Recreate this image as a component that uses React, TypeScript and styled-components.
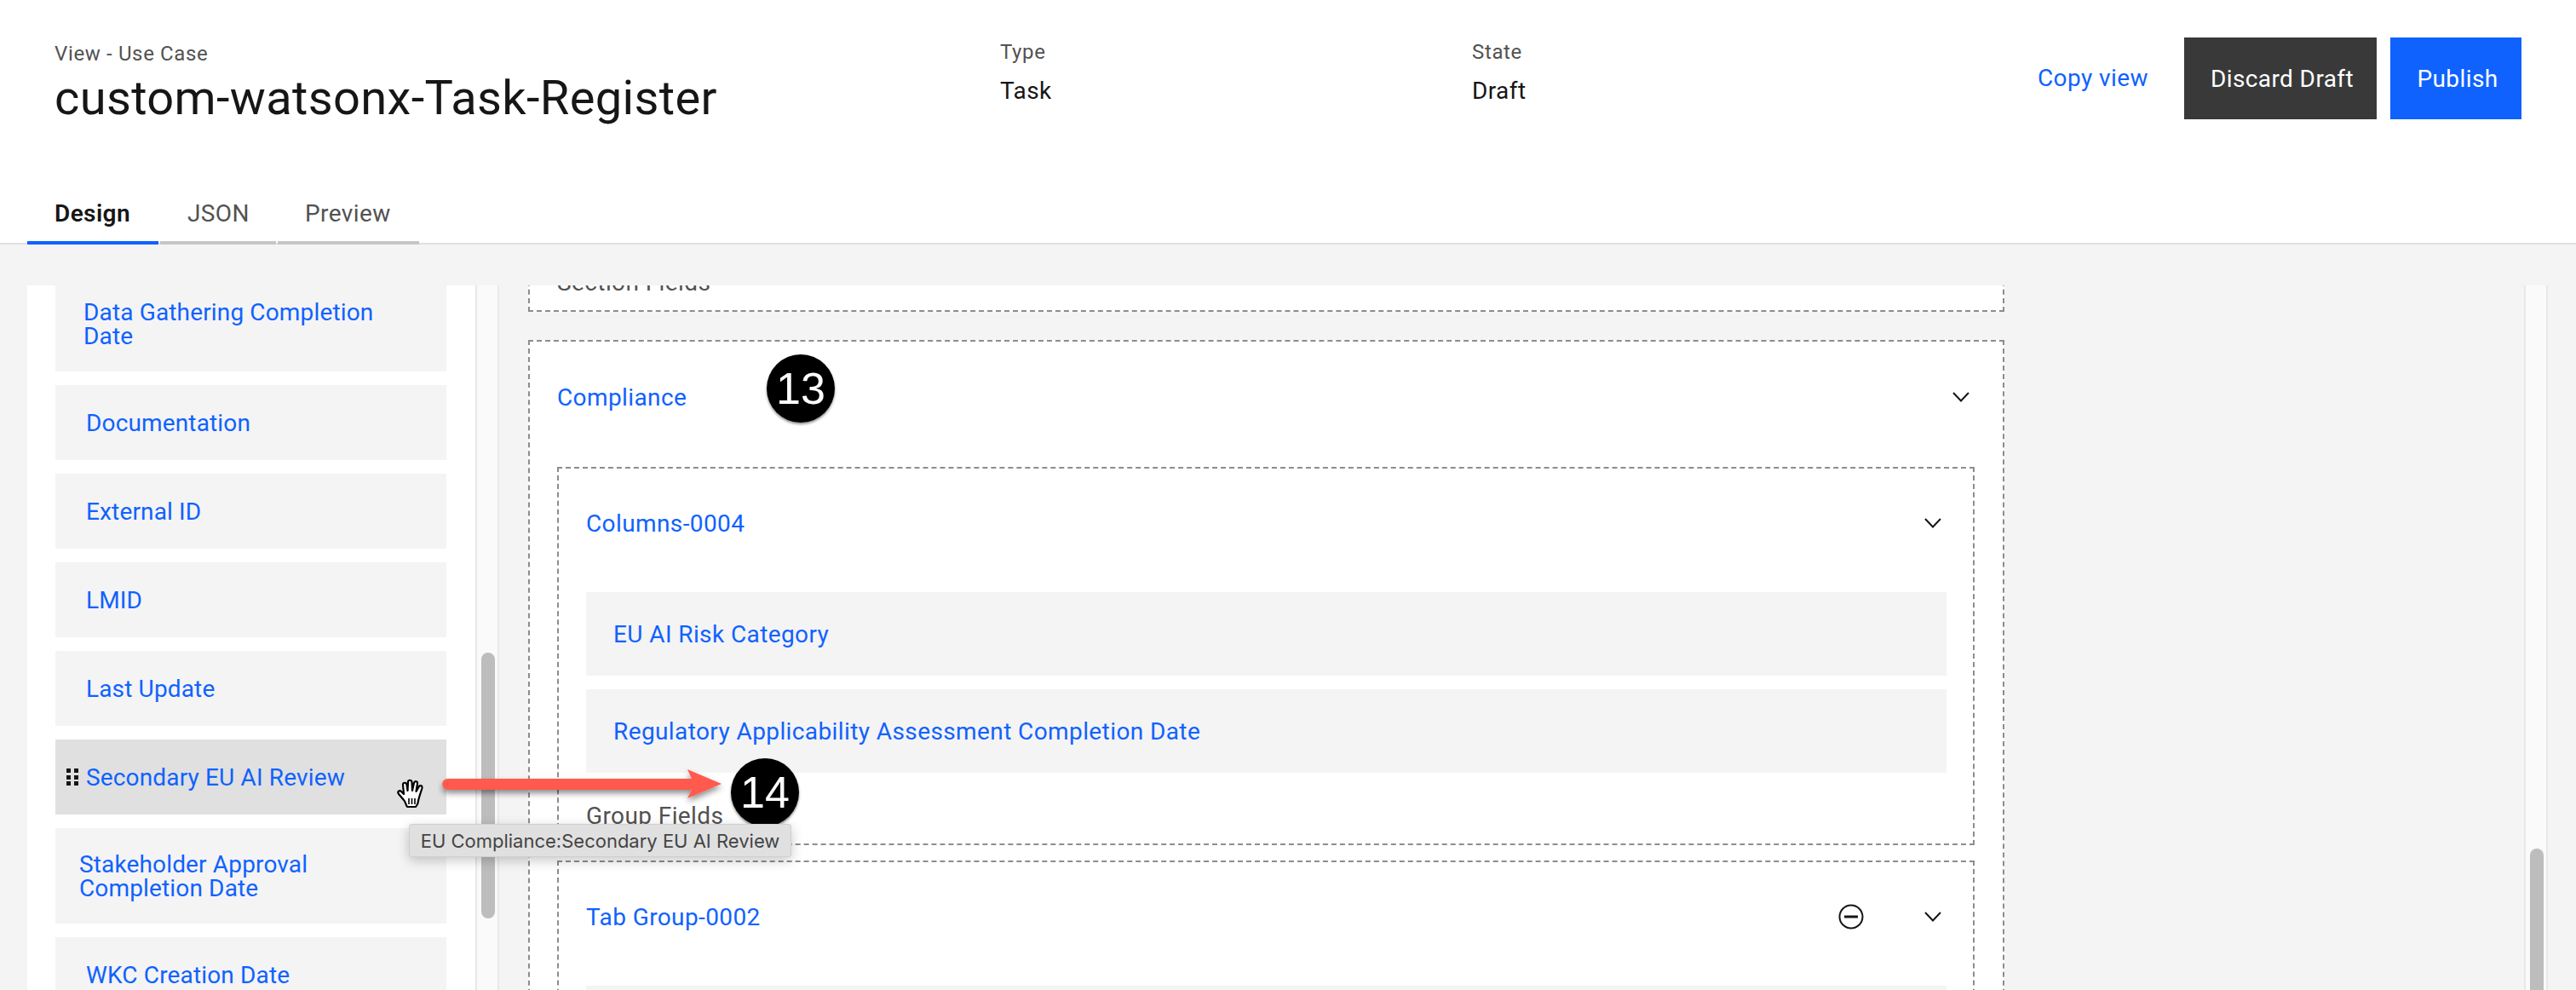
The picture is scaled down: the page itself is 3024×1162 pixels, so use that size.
import React from 'react';
import styled, { createGlobalStyle } from 'styled-components';

const FONT = `'Roboto', 'Noto Sans', sans-serif`;
const BLUE = '#0f62fe';
const BODY_SPACING = '0.4px';

const GlobalStyle = createGlobalStyle`
  html, body {
    margin: 0;
    padding: 0;
    background: #f4f4f4;
    overflow: hidden;
  }
  * {
    box-sizing: border-box;
  }
`;

type Field = { label: string; inset: number };

const FIELDS: Field[] = [
  { label: 'Data Gathering Completion Date', inset: 33 },
  { label: 'Documentation', inset: 36 },
  { label: 'External ID', inset: 36 },
  { label: 'LMID', inset: 36 },
  { label: 'Last Update', inset: 36 },
  { label: 'Secondary EU AI Review', inset: 36 },
  { label: 'Stakeholder Approval Completion Date', inset: 28 },
  { label: 'WKC Creation Date', inset: 36 },
];

const ChevronIcon = () => (
  <svg width="20" height="12" viewBox="0 0 20 12" fill="none">
    <path d="M1 1l9 9.5L19 1" stroke="#161616" strokeWidth="2" />
  </svg>
);

const MinusCircleIcon = () => (
  <svg width="30" height="30" viewBox="0 0 30 30" fill="none">
    <circle cx="15" cy="15" r="13.5" stroke="#161616" strokeWidth="2" />
    <rect x="7" y="13.5" width="16" height="3" fill="#161616" />
  </svg>
);

const DragHandleIcon = () => (
  <svg width="14" height="20" viewBox="0 0 14 20" fill="#161616">
    <rect x="0" y="0" width="5" height="5" />
    <rect x="9" y="0" width="5" height="5" />
    <rect x="0" y="8" width="5" height="5" />
    <rect x="9" y="8" width="5" height="5" />
    <rect x="0" y="15" width="5" height="5" />
    <rect x="9" y="15" width="5" height="5" />
  </svg>
);

const HandCursorIcon = () => (
  <svg width="34" height="36" viewBox="0 0 34 36">
    <path
      d="M9 25 L3 18 C1 15 4 13 6 15 L9 18 L8 7 C8 4 12 4 12.5 7 L13.5 14 L14 4 C14 1 18 1 18.5 4 L19 14 L21 5 C22 2 25.5 3 25 6 L23.5 15 L27 9 C28.5 7 31 8.5 30.5 11 L27 22 C26 25 26 27 25 30 L23 33 L13 33 C11 30 11 27 9 25 Z"
      fill="#fff"
      stroke="#000"
      strokeWidth="2.2"
      strokeLinejoin="round"
    />
    <path d="M15 23v7M18.5 23v7M22 23v7" stroke="#000" strokeWidth="1.6" />
  </svg>
);

const ArrowGraphic = () => (
  <svg width="360" height="64" viewBox="0 0 360 64">
    <defs>
      <filter id="arrow-shadow" x="-5%" y="-30%" width="110%" height="170%">
        <feDropShadow dx="0" dy="4" stdDeviation="3.5" floodColor="#000" floodOpacity="0.45" />
      </filter>
    </defs>
    <path
      d="M12 13 H298 L293 2 L333 19 L293 36 L298 26 H12 C3 26 3 13 12 13 Z"
      fill="#ff5a4d"
      filter="url(#arrow-shadow)"
    />
  </svg>
);

export default function App() {
  return (
    <>
      <GlobalStyle />
      <Page>
        <Header>
          <TitleBlock>
            <Eyebrow>View - Use Case</Eyebrow>
            <Title>custom-watsonx-Task-Register</Title>
          </TitleBlock>
          <MetaBlock $width={554}>
            <MetaLabel>Type</MetaLabel>
            <MetaValue>Task</MetaValue>
          </MetaBlock>
          <MetaBlock $width={664}>
            <MetaLabel>State</MetaLabel>
            <MetaValue>Draft</MetaValue>
          </MetaBlock>
          <CopyLink>Copy view</CopyLink>
          <ActionButton $bg="#393939" $width={226}>
            Discard Draft
          </ActionButton>
          <ActionButton $bg={BLUE} $width={154}>
            Publish
          </ActionButton>
        </Header>

        <TabBar>
          <Tab $active $width={154}>
            Design
          </Tab>
          <Tab $width={136}>JSON</Tab>
          <Tab $width={166}>Preview</Tab>
        </TabBar>

        <Workspace>
          <Palette>
            <FieldList>
              {FIELDS.map((f) => {
                const hovered = f.label === 'Secondary EU AI Review';
                return (
                  <FieldItem key={f.label} $hovered={hovered} $inset={f.inset}>
                    {hovered && (
                      <HandleSlot>
                        <DragHandleIcon />
                      </HandleSlot>
                    )}
                    <FieldText>{f.label}</FieldText>
                  </FieldItem>
                );
              })}
            </FieldList>
            <ScrollTrack>
              <ScrollThumb $top={431} $height={312} />
            </ScrollTrack>
          </Palette>

          <Canvas>
            <SectionRemainder>
              <FieldsLabel>Section Fields</FieldsLabel>
            </SectionRemainder>

            <OuterBox>
              <BoxHeader $height={130}>
                <BoxTitle>Compliance</BoxTitle>
                <IconSlot>
                  <ChevronIcon />
                </IconSlot>
              </BoxHeader>

              <InnerBox>
                <BoxHeader $height={128}>
                  <BoxTitle>Columns-0004</BoxTitle>
                  <IconSlot>
                    <ChevronIcon />
                  </IconSlot>
                </BoxHeader>
                <RowStack>
                  <FieldRow>EU AI Risk Category</FieldRow>
                  <FieldRow>Regulatory Applicability Assessment Completion Date</FieldRow>
                </RowStack>
                <FieldsLabel>Group Fields</FieldsLabel>
              </InnerBox>

              <InnerBox>
                <BoxHeader $height={128}>
                  <BoxTitle>Tab Group-0002</BoxTitle>
                  <RemoveSlot>
                    <MinusCircleIcon />
                  </RemoveSlot>
                  <IconSlot>
                    <ChevronIcon />
                  </IconSlot>
                </BoxHeader>
                <RowStack>
                  <FieldRow />
                </RowStack>
              </InnerBox>
            </OuterBox>
          </Canvas>

          <ScrollTrack>
            <ScrollThumb $top={661} $height={300} />
          </ScrollTrack>
        </Workspace>

        <StepBadge $left={900} $top={416}>
          13
        </StepBadge>
        <StepBadge $left={858} $top={890}>
          14
        </StepBadge>
        <ArrowOverlay>
          <ArrowGraphic />
        </ArrowOverlay>
        <CursorOverlay>
          <HandCursorIcon />
        </CursorOverlay>
        <Tooltip>EU Compliance:Secondary EU AI Review</Tooltip>
      </Page>
    </>
  );
}

const Page = styled.div`
  position: relative;
  width: 3024px;
  height: 1162px;
  overflow: hidden;
  display: flex;
  flex-direction: column;
  background: #f4f4f4;
  font-family: ${FONT};
  color: #161616;
  letter-spacing: ${BODY_SPACING};
`;

const Header = styled.header`
  height: 237px;
  flex: none;
  display: flex;
  align-items: flex-start;
  padding: 44px 64px 0 64px;
  background: #fff;
`;

const TitleBlock = styled.div`
  width: 1110px;
  flex: none;
`;

const Eyebrow = styled.div`
  font-size: 24px;
  line-height: 32px;
  letter-spacing: 0.64px;
  color: #525252;
  margin-top: 3px;
`;

const Title = styled.h1`
  margin: 0;
  font-size: 56px;
  line-height: 72px;
  font-weight: 400;
  letter-spacing: 0.35px;
  color: #161616;
`;

const MetaBlock = styled.div<{ $width: number }>`
  width: ${(p) => p.$width}px;
  flex: none;
`;

const MetaLabel = styled.div`
  font-size: 24px;
  line-height: 32px;
  letter-spacing: 0.64px;
  color: #525252;
  margin-top: 1px;
`;

const MetaValue = styled.div`
  margin-top: 12px;
  font-size: 28px;
  line-height: 36px;
  color: #161616;
`;

const CopyLink = styled.a`
  width: 172px;
  flex: none;
  font-size: 28px;
  line-height: 96px;
  color: ${BLUE};
`;

const ActionButton = styled.button<{ $bg: string; $width: number }>`
  width: ${(p) => p.$width}px;
  height: 96px;
  flex: none;
  margin-left: ${(p) => (p.$width === 154 ? 16 : 0)}px;
  border: 0;
  background: ${(p) => p.$bg};
  color: #fff;
  font-family: ${FONT};
  font-size: 28px;
  letter-spacing: ${BODY_SPACING};
  padding: 0 0 0 4px;
`;

const TabBar = styled.nav`
  height: 50px;
  flex: none;
  display: flex;
  align-items: flex-end;
  gap: 2px;
  padding-left: 32px;
  background: #fff;
  border-bottom: 2px solid #e0e0e0;
`;

const Tab = styled.div<{ $active?: boolean; $width: number }>`
  width: ${(p) => p.$width}px;
  height: 50px;
  margin-bottom: -2px;
  padding-left: 32px;
  font-size: 28px;
  line-height: 28px;
  font-weight: ${(p) => (p.$active ? 600 : 400)};
  color: ${(p) => (p.$active ? '#161616' : '#525252')};
  border-bottom: 4px solid ${(p) => (p.$active ? BLUE : '#c6c6c6')};
`;

const Workspace = styled.main`
  flex: 1;
  min-height: 0;
  display: flex;
  padding: 48px 34px 0 32px;
`;

const Palette = styled.aside`
  width: 554px;
  flex: none;
  display: flex;
  background: #fff;
`;

const FieldList = styled.div`
  flex: 1;
  overflow: hidden;
  padding: 0 34px 0 33px;
`;

const FieldItem = styled.div<{ $hovered: boolean; $inset: number }>`
  position: relative;
  min-height: 88px;
  display: flex;
  align-items: center;
  margin-bottom: 16px;
  padding: 29px 40px 27px ${(p) => p.$inset}px;
  background: ${(p) => (p.$hovered ? '#e0e0e0' : '#f4f4f4')};

  &:first-child {
    margin-top: -11px;
  }
`;

const HandleSlot = styled.span`
  position: absolute;
  left: 13px;
  top: 34px;
  display: flex;
`;

const FieldText = styled.span`
  font-size: 28px;
  line-height: 28px;
  letter-spacing: 0.15px;
  color: ${BLUE};
`;

const ScrollTrack = styled.div`
  width: 28px;
  flex: none;
  padding: 0 5px;
  background: #fafafa;
  border-left: 2px solid #e8e8e8;
  border-right: 2px solid #e8e8e8;
`;

const ScrollThumb = styled.div<{ $top: number; $height: number }>`
  width: 16px;
  height: ${(p) => p.$height}px;
  margin-top: ${(p) => p.$top}px;
  border-radius: 8px;
  background: #bdbdbd;
`;

const Canvas = styled.section`
  width: 1733px;
  flex: none;
  margin: 0 610px 0 34px;
  overflow: hidden;
`;

const SectionRemainder = styled.div`
  margin-top: -56px;
  padding: 0 32px;
  background: #fff;
  border: 2px dashed #8d8d8d;
`;

const OuterBox = styled.div`
  margin-top: 33px;
  padding: 0 33px 0 32px;
  background: #fff;
  border: 2px dashed #8d8d8d;
`;

const InnerBox = styled.div`
  margin-bottom: 18px;
  padding: 0 31px 0 32px;
  background: #fff;
  border: 2px dashed #8d8d8d;
`;

const BoxHeader = styled.div<{ $height: number }>`
  height: ${(p) => p.$height}px;
  margin-bottom: 17px;
  display: flex;
  align-items: center;
`;

const BoxTitle = styled.span`
  flex: 1;
  font-size: 28px;
  color: ${BLUE};
`;

const IconSlot = styled.span`
  width: 32px;
  display: flex;
  justify-content: center;
`;

const RemoveSlot = styled(IconSlot)`
  margin-right: 64px;
`;

const RowStack = styled.div`
  display: flex;
  flex-direction: column;
  gap: 16px;
`;

const FieldRow = styled.div`
  height: 98px;
  display: flex;
  align-items: center;
  padding-left: 32px;
  background: #f4f4f4;
  font-size: 28px;
  color: ${BLUE};
`;

const FieldsLabel = styled.div`
  padding-top: 37px;
  padding-bottom: 18px;
  font-size: 28px;
  line-height: 28px;
  color: #525252;
`;

const StepBadge = styled.div<{ $left: number; $top: number }>`
  position: absolute;
  left: ${(p) => p.$left}px;
  top: ${(p) => p.$top}px;
  width: 80px;
  height: 80px;
  display: flex;
  align-items: center;
  justify-content: center;
  border-radius: 50%;
  background: #000;
  color: #fff;
  font-family: 'Liberation Sans', sans-serif;
  font-size: 52px;
  letter-spacing: 0;
  box-shadow: 0 2px 3px rgba(0, 0, 0, 0.45);
  z-index: 3;
`;

const ArrowOverlay = styled.div`
  position: absolute;
  left: 514px;
  top: 901px;
  display: flex;
  z-index: 2;
`;

const CursorOverlay = styled.div`
  position: absolute;
  left: 465px;
  top: 914px;
  display: flex;
  z-index: 2;
`;

const Tooltip = styled.div`
  position: absolute;
  left: 480px;
  top: 967px;
  width: 449px;
  height: 39px;
  display: flex;
  align-items: center;
  justify-content: center;
  background: #e0e0e0;
  border: 1px solid #d0d0d0;
  border-radius: 3px;
  box-shadow: 0 4px 14px rgba(0, 0, 0, 0.22);
  font-family: 'Inter', sans-serif;
  font-size: 22px;
  letter-spacing: 0;
  color: #444;
  white-space: nowrap;
  z-index: 4;
`;
